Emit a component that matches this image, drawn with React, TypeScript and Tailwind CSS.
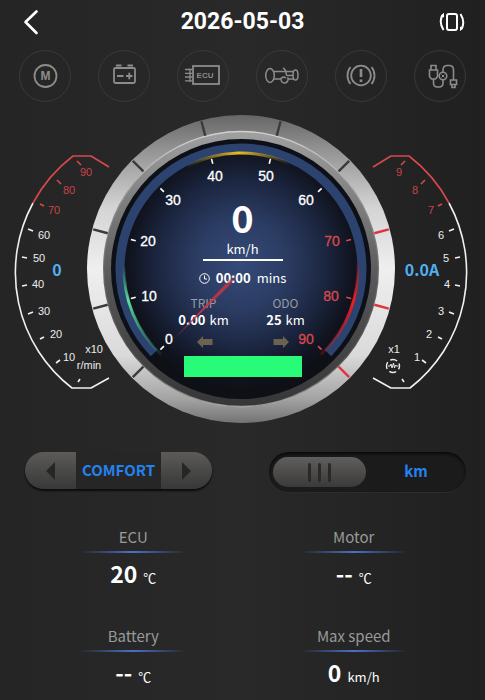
import React, { useState } from "react";

const SANS = "font-['Noto_Sans_CJK_SC',sans-serif]";
const CX = 241;
const CY = 269;

function polar(r: number, deg: number): [number, number] {
  const a = (deg * Math.PI) / 180;
  return [CX + r * Math.sin(a), CY - r * Math.cos(a)];
}

function arc(r: number, from: number, to: number) {
  const [x1, y1] = polar(r, from);
  const [x2, y2] = polar(r, to);
  return `M${x1} ${y1}A${r} ${r} 0 ${to - from > 180 ? 1 : 0} 1 ${x2} ${y2}`;
}

const speedMarks = [
  { v: 0, x: 169, y: 339 },
  { v: 10, x: 149, y: 296 },
  { v: 20, x: 148, y: 241 },
  { v: 30, x: 173, y: 200 },
  { v: 40, x: 215, y: 176 },
  { v: 50, x: 266, y: 176 },
  { v: 60, x: 306, y: 200 },
  { v: 70, x: 332, y: 241 },
  { v: 80, x: 331, y: 296 },
  { v: 90, x: 306, y: 339 },
];

const sideTicks = [
  [78, 382, 80, 379],
  [56, 363, 60, 360],
  [40, 339, 44, 337],
  [28, 314, 33, 312],
  [22, 286, 27, 285],
  [22, 257, 27, 258],
  [28, 229, 33, 231],
  [40, 204, 44, 206],
  [57, 180, 61, 184],
  [77, 161, 81, 165],
];

const rpmLabels = [
  [10, 69, 357], [20, 56, 334], [30, 44, 311], [40, 38, 284], [50, 39, 258],
  [60, 44, 235], [70, 54, 210], [80, 69, 190], [90, 86, 172],
];

const ampLabels = [
  [1, 417, 357], [2, 429, 334], [3, 441, 311], [4, 447, 284], [5, 446, 258],
  [6, 441, 235], [7, 431, 210], [8, 415, 190], [9, 399, 172],
];

function SideOutline() {
  return (
    <g fill="none" strokeWidth="1.6" strokeLinejoin="round">
      <path d="M33 203A146 146 0 0 0 72 388H91L109 378" stroke="#f0f0f0" />
      <path d="M33 203A146 146 0 0 1 73 156H91L109 167" stroke="#d8484c" />
      {sideTicks.map(([a, b, c, d], i) => (
        <path key={i} d={`M${a} ${b}L${c} ${d}`} stroke={i > 6 ? "#d8484c" : "#f0f0f0"} />
      ))}
    </g>
  );
}

function Gauge() {
  return (
    <svg viewBox="0 110 485 320" className="block w-full" role="img" aria-label="Speed, motor speed and current gauges">
      <defs>
        <linearGradient id="ring" x1="0" y1="0" x2="0" y2="1">
          <stop offset="0" stopColor="#666" />
          <stop offset="0.1" stopColor="#8e8e8e" />
          <stop offset="0.3" stopColor="#d4d4d4" />
          <stop offset="0.5" stopColor="#efefef" />
          <stop offset="0.78" stopColor="#dadada" />
          <stop offset="0.92" stopColor="#a4a4a4" />
          <stop offset="1" stopColor="#737373" />
        </linearGradient>
        <linearGradient id="bevel" x1="0" y1="0" x2="0" y2="1">
          <stop offset="0" stopColor="#a0a0a0" />
          <stop offset="0.25" stopColor="#808080" />
          <stop offset="0.55" stopColor="#565656" />
          <stop offset="1" stopColor="#363636" />
        </linearGradient>
        <linearGradient id="rim" x1="0" y1="0" x2="0" y2="1">
          <stop offset="0" stopColor="#ddd" stopOpacity="0.8" />
          <stop offset="0.3" stopColor="#ccc" stopOpacity="0.2" />
          <stop offset="0.8" stopColor="#ccc" stopOpacity="0.1" />
          <stop offset="1" stopColor="#ddd" stopOpacity="0.6" />
        </linearGradient>
        <radialGradient id="face" cx="0.5" cy="0.48" r="0.5">
          <stop offset="0" stopColor="#344a78" />
          <stop offset="0.35" stopColor="#2c3d64" />
          <stop offset="0.68" stopColor="#1b253f" />
          <stop offset="0.9" stopColor="#10131d" />
          <stop offset="1" stopColor="#0e1016" />
        </radialGradient>
        <linearGradient id="yellow">
          <stop offset="0" stopColor="#e0b41c" stopOpacity="0" />
          <stop offset="0.5" stopColor="#e8bd20" />
          <stop offset="1" stopColor="#e0b41c" stopOpacity="0" />
        </linearGradient>
        <linearGradient id="green" x1="0" y1="0" x2="0" y2="1">
          <stop offset="0" stopColor="#3fbf80" stopOpacity="0" />
          <stop offset="0.4" stopColor="#5cdd9c" />
          <stop offset="1" stopColor="#3fbf80" stopOpacity="0.1" />
        </linearGradient>
        <linearGradient id="red" x1="0" y1="0" x2="0" y2="1">
          <stop offset="0" stopColor="#e01820" stopOpacity="0" />
          <stop offset="0.45" stopColor="#f01c20" />
          <stop offset="1" stopColor="#d01820" stopOpacity="0.2" />
        </linearGradient>
      </defs>

      <circle cx={CX} cy={CY} r="154" fill="url(#ring)" />
      <circle cx={CX} cy={CY} r="138" fill="url(#bevel)" />
      <circle cx={CX} cy={CY} r="137.5" fill="none" stroke="url(#rim)" strokeWidth="1.4" />
      <circle cx={CX} cy={CY} r="130" fill="#0d1117" />
      <circle cx={CX} cy={CY} r="126" fill="url(#face)" />
      <path d={arc(121, -134, 134)} fill="none" stroke="#2b436e" strokeWidth="9" />
      <path d={arc(116, -28, 25)} fill="none" stroke="url(#yellow)" strokeWidth="3" />
      <path d={arc(117, -137, -88)} fill="none" stroke="url(#green)" strokeWidth="3" />
      <path d={arc(117, 85, 137)} fill="none" stroke="url(#red)" strokeWidth="3" />

      {speedMarks.map(({ v, x, y }, i) => {
        const deg = -135 + i * 30;
        const [a, b] = polar(109, deg);
        const [c, d] = polar(114, deg);
        const [e, f] = polar(138, deg);
        const [g, h] = polar(153, deg);
        const hot = v >= 70;
        return (
          <g key={v}>
            <path d={`M${a} ${b}L${c} ${d}`} stroke={hot ? "#d84850" : "#fff"} strokeWidth="1.6" />
            <path d={`M${e} ${f}L${g} ${h}`} stroke={hot ? "#e0343c" : "#3a3a3a"} strokeWidth="2.4" />
            <text x={x} y={y + 5} textAnchor="middle" className="font-['Liberation_Sans',sans-serif] text-[14px]" fill={hot ? "#d84850" : "#fff"} stroke={hot ? "#d84850" : "#fff"} strokeWidth="0.3">
              {v}
            </text>
          </g>
        );
      })}

      <SideOutline />
      <g transform="translate(482 0) scale(-1 1)">
        <SideOutline />
      </g>
      <g className="font-['Liberation_Sans',sans-serif] text-[11px]" textAnchor="middle" fill="#ececec">
        {rpmLabels.map(([v, x, y]) => (
          <text key={v} x={x} y={y + 4} fill={v >= 70 ? "#c94448" : "#ececec"}>{v}</text>
        ))}
        {ampLabels.map(([v, x, y]) => (
          <text key={v} x={x} y={y + 4} fill={v >= 7 ? "#c94448" : "#ececec"}>{v}</text>
        ))}
        <text x="94" y="353">x10</text>
        <text x="89" y="369">r/min</text>
        <text x="394" y="353">x1</text>
      </g>
      <g fill="none" stroke="#ececec">
        <circle cx="393" cy="366" r="6.5" strokeWidth="1.4" strokeDasharray="7.2 3" strokeDashoffset="3.6" />
        <path d="M388 366h2l1-2 1 4 1.5-5 1 5 1-3 .8 1h2" strokeWidth="1" />
      </g>
      <g className="font-['Noto_Sans_CJK_SC',sans-serif] text-[16px] font-bold" textAnchor="middle" fill="#50b0f0">
        <text x="57" y="276">0</text>
        <text x="422" y="276">0.0A</text>
      </g>
    </svg>
  );
}

function Needle() {
  return (
    <svg viewBox="0 110 485 320" className="pointer-events-none absolute inset-0 w-full" aria-hidden="true">
      <defs>
        <linearGradient id="needle" x1="0" y1="1" x2="1" y2="0">
          <stop offset="0" stopColor="#d8323e" stopOpacity="0.3" />
          <stop offset="0.3" stopColor="#d8323e" stopOpacity="0.85" />
          <stop offset="0.85" stopColor="#d8323e" stopOpacity="0.8" />
          <stop offset="1" stopColor="#d8323e" stopOpacity="0" />
        </linearGradient>
      </defs>
      <path d="M173 340L233 276L236 279Z" fill="url(#needle)" />
    </svg>
  );
}

function Trip({ label, value }: { label: string; value: string }) {
  return (
    <div>
      <dt className="text-[12px] leading-4 text-[#969ba8]">{label}</dt>
      <dd className="mt-px flex justify-center gap-1 text-[13px] leading-4">
        <b>{value}</b> km
      </dd>
    </div>
  );
}

function TurnArrow({ className = "" }: { className?: string }) {
  return (
    <svg width="16" height="12" viewBox="0 0 16 12" className={className} fill="#6b6252" aria-hidden="true">
      <path d="M0 6L6 0V3H15.500V9H6V12Z" />
    </svg>
  );
}

function Readout() {
  return (
    <div className="absolute inset-x-0 top-[86px] flex flex-col items-center text-center text-white">
      <div className="text-[38px] leading-[42px] font-bold">0</div>
      <div className="mt-[3px] text-[13px] leading-4">km/h</div>
      <div className="mt-0.5 h-0.5 w-20 bg-white" />
      <div className="mt-[7px] flex items-center gap-1.5 text-[13px] leading-5">
        <svg width="11" height="11" viewBox="0 0 11 11" fill="none" stroke="#fff" aria-hidden="true">
          <circle cx="5.500" cy="5.500" r="4.800" />
          <path d="M5.500 2.500V6H8" />
        </svg>
        <b>00:00</b>
        mins
      </div>
      <dl className="mt-[7px] ml-1 grid w-[164px] grid-cols-2">
        <Trip label="TRIP" value="0.00" />
        <Trip label="ODO" value="25" />
      </dl>
      <div className="mt-2 flex w-[92px] justify-between">
        <TurnArrow />
        <TurnArrow className="rotate-180" />
      </div>
      <div className="mt-2 h-[21px] w-[118px] bg-[#28fb78]" />
    </div>
  );
}

function StatusButton({ label, children }: { label: string; children: React.ReactNode }) {
  return (
    <button type="button" aria-label={label} className="size-[52px] rounded-full border border-[#393939]">
      <svg width="52" height="52" viewBox="0 0 52 52" fill="none" stroke="#8c8c8c" strokeWidth="1.800" className="-m-px">
        {children}
      </svg>
    </button>
  );
}

function StatusRow() {
  return (
    <div className="flex justify-between px-[19px] pt-1.5">
      <StatusButton label="Motor">
        <circle cx="26.500" cy="26" r="11" />
        <text x="26.500" y="30" textAnchor="middle" stroke="none" fill="#8c8c8c" className="font-['Liberation_Sans',sans-serif] text-[12px] font-bold">M</text>
      </StatusButton>
      <StatusButton label="Battery">
        <rect x="16" y="18" width="21" height="15" rx="1.500" />
        <path d="M18 15.500H23.500M29.500 15.500H35M19 26H25.500M28 26H34.500M31.300 22.800V29.200" />
      </StatusButton>
      <StatusButton label="Controller">
        <rect x="16" y="16" width="26" height="18" />
        <path d="M8 19.500H15M8 23.300H15M8 27H15M8 30.800H15M13 18.500V32" strokeWidth="1.300" />
        <text x="28" y="28" textAnchor="middle" stroke="none" fill="#8c8c8c" className="font-['Liberation_Sans',sans-serif] text-[8px] font-bold">ECU</text>
      </StatusButton>
      <StatusButton label="Throttle">
        <g strokeWidth="1.500">
          <ellipse cx="14" cy="25.500" rx="4.300" ry="7" />
          <path d="M17.500 21.500H38M17.500 29H25M32 29H38" />
          <ellipse cx="39.500" cy="25" rx="2.500" ry="5" />
          <path d="M27 18Q30 19 30.500 25.500M31.500 27.500A3.600 3.600 0 1 1 25 28.500Q27 26 30 28M30.500 25.500H37" />
        </g>
      </StatusButton>
      <StatusButton label="Brake">
        <circle cx="26" cy="25.500" r="9.800" />
        <path d="M15.500 17A13.500 13.500 0 0 0 15.500 34M36.500 17A13.500 13.500 0 0 1 36.500 34" />
        <path d="M26 19V27M26 29.500V32" strokeWidth="2.600" />
      </StatusButton>
      <StatusButton label="Cable">
        <g strokeWidth="1.600">
          <path d="M17 20V15.500H22V20M15.500 20H23.500V26.500L21.500 29H17.500L15.500 26.500Z" />
          <path d="M19.500 29V33Q19.500 37 23.500 37H25Q29 37 29 33V30M29 22V20Q29 15.500 33.500 15.500H35Q39.500 15.500 39.500 20V30" />
          <circle cx="29" cy="26" r="3.800" />
          <path d="M27.500 24.500L30.500 27.500M30.500 24.500L27.500 27.500" strokeWidth="1" />
          <path d="M36.500 30H42.500V34.500H36.500ZM38 34.500V37.500H41V34.500" />
        </g>
      </StatusButton>
    </div>
  );
}

function Header() {
  return (
    <header className="flex h-11 items-center justify-between px-[19px]">
      <button type="button" aria-label="Back" className="flex w-7 justify-start pl-1">
        <svg width="16" height="26" viewBox="0 0 16 26" fill="none" stroke="#fff" strokeWidth="2.600" strokeLinecap="round" strokeLinejoin="round">
          <path d="M13.500 2.500L2.500 13L13.500 24" />
        </svg>
      </button>
      <h1 className="font-[Roboto,sans-serif] text-[23px] leading-7 font-bold text-white">2026-05-03</h1>
      <button type="button" aria-label="Rotate screen">
        <svg width="28" height="22" viewBox="0 0 28 22" fill="none" stroke="#fff" strokeWidth="2">
          <rect x="9" y="3" width="10" height="16" rx="2" />
          <path d="M4.500 4Q0.500 11 5.500 19M23.500 18Q27.500 11 22.500 3" />
          <path d="M3 5.500L5.500 2.500V6ZM25 16.500L22.500 19.500V16Z" fill="#fff" strokeWidth="1" />
        </svg>
      </button>
    </header>
  );
}

const modes = ["COMFORT", "SPORT", "ECO"];

function ModeStepper() {
  const [mode, setMode] = useState(0);
  const step = (n: number) => setMode((mode + n + modes.length) % modes.length);
  const end = "flex w-[51px] items-center justify-center bg-linear-to-b from-[#5c5b59] to-[#383838]";
  return (
    <div className="flex h-[37px] overflow-hidden rounded-full shadow-[0_2px_2px_#0c0c0c]">
      <button type="button" aria-label="Previous mode" className={end} onClick={() => step(-1)}>
        <svg width="9" height="18" viewBox="0 0 9 18" fill="#262626"><path d="M9 0V18L0 9Z" /></svg>
      </button>
      <output className="flex w-[85px] items-center justify-center bg-[#262626] pb-0.5 text-[15px] leading-5 font-bold text-[#2482ee]">{modes[mode]}</output>
      <button type="button" aria-label="Next mode" className={end} onClick={() => step(1)}>
        <svg width="9" height="18" viewBox="0 0 9 18" fill="#262626"><path d="M0 0V18L9 9Z" /></svg>
      </button>
    </div>
  );
}

function UnitSwitch() {
  return (
    <label className="relative flex h-10 w-[197px] cursor-pointer items-center rounded-full bg-[#1b1b1b] pl-1 shadow-[inset_0_2px_3px_#0a0a0a,0_1px_0_#2c2c2c]">
      <input type="checkbox" role="switch" aria-label="Distance unit" className="sr-only" />
      <span className="flex h-[30px] w-[93px] items-center justify-center gap-[7px] rounded-full bg-linear-to-b from-[#605f5d] to-[#3b3a3a]">
        <span className="h-[19px] w-[3px] rounded-full bg-[#2a2929]" />
        <span className="h-[19px] w-[3px] rounded-full bg-[#2a2929]" />
        <span className="h-[19px] w-[3px] rounded-full bg-[#2a2929]" />
      </span>
      <span className="flex-1 pb-0.5 text-center text-[15px] leading-5 font-bold text-[#2482ee]">km</span>
    </label>
  );
}

function Stat({ label, value, unit }: { label: string; value: string; unit: string }) {
  return (
    <div className="flex flex-col items-center">
      <dt className="text-[15px] leading-6 text-[#999]">{label}</dt>
      <div className="mt-0.5 h-0.5 w-[106px] bg-linear-to-r from-transparent via-[#4a70c8] to-transparent" />
      <dd className="mt-1.5 flex h-7 items-baseline gap-1.5 text-white">
        <b className="text-[23px] leading-7">{value}</b>
        <span className="text-[13px] leading-5">{unit}</span>
      </dd>
    </div>
  );
}

export default function App() {
  return (
    <main className={`min-h-screen bg-linear-to-r from-[#252525] via-[#292929] to-[#202020] pb-2 ${SANS}`}>
      <Header />
      <StatusRow />
      <section className="relative mx-auto mt-2 w-full max-w-[485px]">
        <Gauge />
        <Readout />
        <Needle />
      </section>
      <div className="mt-[22px] flex items-start justify-between pr-[19px] pl-[25px]">
        <ModeStepper />
        <UnitSwitch />
      </div>
      <dl className="mt-[33px] grid grid-cols-2 gap-y-[37px] pr-[21px] pl-[23px]">
        <Stat label="ECU" value="20" unit="℃" />
        <Stat label="Motor" value="--" unit="℃" />
        <Stat label="Battery" value="--" unit="℃" />
        <Stat label="Max speed" value="0" unit="km/h" />
      </dl>
    </main>
  );
}
